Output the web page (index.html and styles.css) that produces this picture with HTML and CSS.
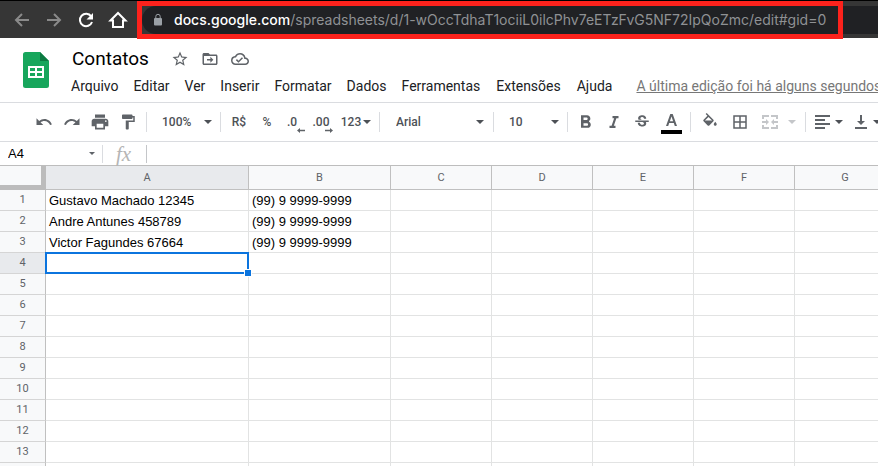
FILE: index.html
```html
<!DOCTYPE html>
<html lang="pt-BR">
<head>
<meta charset="utf-8">
<title>Contatos</title>
<link rel="stylesheet" href="styles.css">
</head>
<body>
<div class="browser">
  <button class="nav off" aria-label="Voltar"><svg width="20" height="20" viewBox="0 0 20 20"><path d="M17 10H4M10 4L4 10l6 6"/></svg></button>
  <button class="nav off" aria-label="Avançar"><svg width="20" height="20" viewBox="0 0 20 20"><path d="M3 10h13M10 4l6 6-6 6"/></svg></button>
  <button class="nav" aria-label="Recarregar"><svg width="20" height="20" viewBox="0 0 20 20"><path d="M15.2 6.4A6.2 6.2 0 1 0 16 12" /><path class="solid" d="M17 3v6.500h-6.500z"/></svg></button>
  <button class="nav" aria-label="Página inicial"><svg width="20" height="20" viewBox="0 0 20 20"><path d="M2.500 10.500L10 3l7.500 7.500H15V17H5v-6.500z"/></svg></button>
  <div class="omnibox">
    <svg class="lock" width="10" height="14" viewBox="0 0 10 14"><rect x="1" y="5" width="8" height="7.500" rx="1"/><path d="M2.800 5V3.500a2.200 2.200 0 0 1 4.400 0V5"/></svg>
    <div class="url" role="textbox" aria-label="Endereço" contenteditable="true" spellcheck="false"><span class="host">docs.google.com</span>/spreadsheets/d/1-wOccTdhaT1ociiL0ilcPhv7eETzFvG5NF72IpQoZmc/edit#gid=0</div>
    <div class="highlight"></div>
  </div>
</div>

<header class="header">
  <a class="logo" href="#" aria-label="Planilhas"><svg width="26" height="36" viewBox="0 0 26 36"><path fill="#17a65c" d="M2.500 0H17l9 9v24.500a2.500 2.500 0 0 1-2.500 2.500h-21A2.500 2.500 0 0 1 0 33.500v-31A2.500 2.500 0 0 1 2.500 0z"/><path fill="#0c7a42" d="M17 0l9 9h-9z"/><path fill="#fff" fill-rule="evenodd" d="M5 14h16v12H5zM7 16v3h5v-3zM14 16v3h5v-3zM7 21v3h5v-3zM14 21v3h5v-3z"/></svg></a>
  <div class="heading">
    <div class="title-row">
      <input class="title" aria-label="Nome do documento" value="Contatos" spellcheck="false">
      <button class="doc-icon" aria-label="Marcar com estrela"><svg width="18" height="18" viewBox="0 0 24 24"><path d="M22 9.240l-7.190-.620L12 2 9.190 8.630 2 9.240l5.460 4.730L5.820 21 12 17.270 18.180 21l-1.630-7.030L22 9.240zM12 15.400l-3.760 2.270 1-4.280-3.320-2.880 4.380-.380L12 6.100l1.710 4.040 4.380.380-3.320 2.880 1 4.280L12 15.400z"/></svg></button>
      <button class="doc-icon" aria-label="Mover"><svg width="18" height="18" viewBox="0 0 24 24"><path d="M20 6h-8l-2-2H4c-1.100 0-2 .9-2 2v12c0 1.100.9 2 2 2h16c1.100 0 2-.9 2-2V8c0-1.100-.9-2-2-2zm0 12H4V8h16v10zm-7.500-1l4-4-4-4v3H8v2h4.500z"/></svg></button>
      <button class="doc-icon" aria-label="Status do documento"><svg width="18" height="18" viewBox="0 0 24 24"><path d="M19.350 10.040A7.490 7.490 0 0 0 12 4C9.110 4 6.600 5.640 5.350 8.040A5.994 5.994 0 0 0 0 14c0 3.310 2.690 6 6 6h13c2.760 0 5-2.240 5-5 0-2.640-2.050-4.780-4.650-4.960zM19 18H6c-2.210 0-4-1.790-4-4 0-2.050 1.530-3.760 3.560-3.970l1.070-.110.500-.950A5.469 5.469 0 0 1 12 6c2.620 0 4.880 1.860 5.390 4.430l.300 1.500 1.530.110A2.980 2.980 0 0 1 22 15c0 1.650-1.350 3-3 3zm-9-3.820l-2.090-2.090L6.500 13.500 10 17l6.010-6.010-1.410-1.410z"/></svg></button>
    </div>
    <nav class="menu">
      <button>Arquivo</button><button>Editar</button><button>Ver</button><button>Inserir</button><button>Formatar</button><button>Dados</button><button>Ferramentas</button><button>Extensões</button><button>Ajuda</button>
      <a href="#">A última edição foi há alguns segundos</a>
    </nav>
  </div>
</header>

<div class="toolbar" role="toolbar">
  <div class="group">
    <button aria-label="Desfazer"><svg width="18" height="18" viewBox="0 0 24 24"><path d="M12.500 8c-2.650 0-5.050.99-6.900 2.600L2 7v9h9l-3.620-3.620c1.390-1.160 3.160-1.880 5.120-1.880 3.540 0 6.550 2.310 7.600 5.500l2.370-.780C21.080 11.030 17.150 8 12.500 8z"/></svg></button>
    <button aria-label="Refazer"><svg width="18" height="18" viewBox="0 0 24 24"><path d="M18.400 10.600C16.550 8.990 14.150 8 11.500 8c-4.650 0-8.580 3.030-9.960 7.220L3.900 16c1.050-3.190 4.050-5.500 7.600-5.500 1.950 0 3.730.720 5.120 1.880L13 16h9V7l-3.600 3.600z"/></svg></button>
    <button aria-label="Imprimir"><svg width="20" height="20" viewBox="0 0 24 24"><path d="M19 8H5c-1.660 0-3 1.340-3 3v6h4v4h12v-4h4v-6c0-1.660-1.340-3-3-3zm-3 11H8v-5h8v5zm3-7c-.550 0-1-.450-1-1s.450-1 1-1 1 .450 1 1-.450 1-1 1zm-1-9H6v4h12V3z"/></svg></button>
    <button aria-label="Pintar formatação"><svg width="18" height="18" viewBox="0 0 24 24"><path d="M18 4V3c0-.550-.450-1-1-1H5c-.550 0-1 .450-1 1v4c0 .550.450 1 1 1h12c.550 0 1-.450 1-1V6h1v4H9v11c0 .550.450 1 1 1h2c.550 0 1-.450 1-1v-9h8V4h-3z"/></svg></button>
  </div>
  <div class="group">
    <label class="pick zoom"><select aria-label="Zoom"><option>100%</option></select><span class="caret"></span></label>
  </div>
  <div class="group">
    <button>R$</button>
    <button>%</button>
    <button class="dec less" aria-label="Diminuir casas decimais">.0<svg width="8" height="5" viewBox="0 0 8 5"><path d="M0 2.500L3 0v1.700h5v1.600H3V5z"/></svg></button>
    <button class="dec" aria-label="Aumentar casas decimais">.00<svg width="8" height="5" viewBox="0 0 8 5"><path d="M8 2.500L5 0v1.700H0v1.600h5V5z"/></svg></button>
    <button class="drop tight">123<span class="caret"></span></button>
  </div>
  <div class="group">
    <label class="pick font"><select aria-label="Fonte"><option>Arial</option></select><span class="caret"></span></label>
  </div>
  <div class="group">
    <label class="pick size"><select aria-label="Tamanho"><option>10</option></select><span class="caret"></span></label>
  </div>
  <div class="group">
    <button aria-label="Negrito"><svg width="20" height="20" viewBox="0 0 24 24"><path d="M15.600 10.790c.970-.670 1.650-1.770 1.650-2.790 0-2.260-1.750-4-4-4H6v15h8.040c2.090 0 3.710-1.700 3.710-3.790 0-1.520-.860-2.820-2.150-3.420zM9 6.500h3.500c.830 0 1.500.670 1.500 1.500s-.670 1.500-1.500 1.500H9v-3zm4 10H9v-3h4c.830 0 1.500.670 1.500 1.500s-.670 1.500-1.500 1.500z"/></svg></button>
    <button aria-label="Itálico"><svg width="18" height="18" viewBox="0 0 24 24"><path d="M10 4v3h2.210l-3.420 10H6v3h8v-3h-2.210l3.420-10H18V4z"/></svg></button>
    <button aria-label="Tachado"><svg width="18" height="18" viewBox="0 0 24 24"><path d="M7.240 8.750c-.260-.480-.390-1.030-.390-1.670 0-.610.130-1.160.400-1.670.260-.500.630-.930 1.110-1.290.480-.350 1.050-.630 1.700-.830.660-.190 1.390-.290 2.180-.290.810 0 1.540.110 2.210.340.660.220 1.230.540 1.690.940.470.400.830.880 1.080 1.430s.380 1.150.380 1.810h-3.010c0-.310-.050-.590-.150-.850-.090-.270-.240-.490-.440-.680-.200-.190-.450-.330-.750-.440-.300-.100-.660-.160-1.060-.160-.390 0-.740.040-1.030.130s-.530.210-.720.360c-.190.160-.340.340-.440.550-.100.210-.150.430-.150.660 0 .480.250.880.740 1.210.380.250.770.480 1.410.700H7.390c-.050-.080-.110-.170-.150-.250zM21 12v-2H3v2h9.620c.180.070.400.140.550.200.370.170.660.340.870.510s.350.360.430.570c.070.200.110.430.110.690 0 .230-.050.450-.140.660-.090.200-.230.380-.420.530-.190.150-.420.260-.710.350-.290.080-.630.130-1.010.130-.430 0-.830-.040-1.180-.130s-.660-.230-.910-.420c-.250-.190-.450-.440-.590-.750s-.250-.760-.250-1.210H6.400c0 .550.080 1.130.240 1.580s.370.850.650 1.210c.280.350.600.660.980.920.370.260.780.480 1.220.650.440.170.900.300 1.380.390.480.080.960.130 1.440.130.800 0 1.530-.090 2.180-.280s1.210-.450 1.670-.790c.460-.340.820-.770 1.070-1.270s.380-1.070.380-1.710c0-.600-.100-1.140-.310-1.610-.050-.110-.110-.230-.170-.330H21z"/></svg></button>
    <button class="ink" aria-label="Cor do texto"><svg width="21" height="20" viewBox="0 0 21 20"><path d="M9.300 0h2.400L16 12h-2.200l-1-3H8.200l-1 3H5zm1.200 2.500L8.900 7.200h3.200z"/><rect class="bar" y="16" width="21" height="4"/></svg></button>
  </div>
  <div class="group wide">
    <button aria-label="Cor de preenchimento"><svg width="18" height="18" viewBox="0 0 24 24"><path d="M16.560 8.940L7.620 0 6.210 1.410l2.380 2.380-5.150 5.150a1.490 1.490 0 0 0 0 2.120l5.500 5.500c.290.290.680.440 1.060.440s.770-.150 1.060-.440l5.500-5.500c.590-.580.590-1.530 0-2.120zM5.210 10L10 5.210 14.790 10zM19 11.500s-2 2.170-2 3.500c0 1.100.9 2 2 2s2-.9 2-2c0-1.330-2-3.500-2-3.500z"/></svg></button>
    <button aria-label="Bordas"><svg width="18" height="18" viewBox="0 0 24 24"><path d="M3 3v18h18V3H3zm8 16H5v-6h6v6zm0-8H5V5h6v6zm8 8h-6v-6h6v6zm0-8h-6V5h6v6z"/></svg></button>
    <button class="merge" aria-label="Mesclar células" disabled><svg width="18" height="16" viewBox="0 0 18 16"><path d="M1 1h7v2H3v2H1zM10 1h7v4h-2V3h-5zM1 11h2v2h5v2H1zM15 11h2v4h-7v-2h5zM1 7h4V5l3 3-3 3V9H1zM17 7h-4V5l-3 3 3 3V9h4z"/></svg><span class="caret"></span></button>
  </div>
  <div class="group">
    <button class="drop" aria-label="Alinhamento horizontal"><svg width="16" height="14" viewBox="0 0 16 14"><path d="M0 0h15v2H0zM0 4h10v2H0zM0 8h15v2H0zM0 12h10v2H0z"/></svg><span class="caret"></span></button>
    <button class="drop" aria-label="Alinhamento vertical"><svg width="16" height="16" viewBox="0 0 16 16"><path d="M2 13h12v2H2zM7 1h2v6h3l-4 4-4-4h3z"/></svg><span class="caret"></span></button>
  </div>
</div>

<div class="formula">
  <label class="name-box"><input aria-label="Caixa de nome" value="A4"><span class="caret small"></span></label>
  <label class="fx" for="fx">fx</label>
  <input id="fx" class="fx-input" spellcheck="false">
</div>

<main class="sheet">
  <table>
    <colgroup><col class="c-num"><col class="c-a"><col class="c-b"><col class="c-n"><col class="c-n"><col class="c-n"><col class="c-n"><col class="c-n"></colgroup>
    <thead><tr><th class="corner"></th><th class="on">A</th><th>B</th><th>C</th><th>D</th><th>E</th><th>F</th><th>G</th></tr></thead>
    <tbody>
      <tr><th>1</th><td>Gustavo Machado 12345</td><td>(99) 9 9999-9999</td><td></td><td></td><td></td><td></td><td></td></tr>
      <tr><th>2</th><td>Andre Antunes 458789</td><td>(99) 9 9999-9999</td><td></td><td></td><td></td><td></td><td></td></tr>
      <tr><th>3</th><td>Victor Fagundes 67664</td><td>(99) 9 9999-9999</td><td></td><td></td><td></td><td></td><td></td></tr>
      <tr><th class="on">4</th><td class="active"><span class="cursor"></span></td><td></td><td></td><td></td><td></td><td></td><td></td></tr>
      <tr><th>5</th><td></td><td></td><td></td><td></td><td></td><td></td><td></td></tr>
      <tr><th>6</th><td></td><td></td><td></td><td></td><td></td><td></td><td></td></tr>
      <tr><th>7</th><td></td><td></td><td></td><td></td><td></td><td></td><td></td></tr>
      <tr><th>8</th><td></td><td></td><td></td><td></td><td></td><td></td><td></td></tr>
      <tr><th>9</th><td></td><td></td><td></td><td></td><td></td><td></td><td></td></tr>
      <tr><th>10</th><td></td><td></td><td></td><td></td><td></td><td></td><td></td></tr>
      <tr><th>11</th><td></td><td></td><td></td><td></td><td></td><td></td><td></td></tr>
      <tr><th>12</th><td></td><td></td><td></td><td></td><td></td><td></td><td></td></tr>
      <tr><th>13</th><td></td><td></td><td></td><td></td><td></td><td></td><td></td></tr>
      <tr><th></th><td></td><td></td><td></td><td></td><td></td><td></td><td></td></tr>
    </tbody>
  </table>
</main>
</body>
</html>
```
FILE: styles.css
```css
* { box-sizing: border-box; }
body {
  margin: 0;
  height: 100vh;
  display: flex;
  flex-direction: column;
  overflow: hidden;
  background: #fff;
  font-family: Roboto, "Liberation Sans", sans-serif;
  color: #202124;
}
button, input, select {
  font: inherit;
  color: inherit;
  background: none;
  border: 0;
  padding: 0;
  margin: 0;
  outline: 0;
  appearance: none;
}
svg { display: block; flex: none; }

.browser {
  flex: none;
  display: flex;
  align-items: center;
  height: 38px;
  padding-left: 6px;
  background: #363636;
  border-top: 1px solid #000;
}
.nav { width: 32px; display: flex; justify-content: center; }
.nav svg { fill: none; stroke: #fff; stroke-width: 2; }
.nav .solid { fill: #fff; stroke: none; }
.nav.off svg { stroke: #8a8a8a; }
.omnibox {
  position: relative;
  flex: 1;
  min-width: 0;
  display: flex;
  align-items: center;
  gap: 11px;
  height: 28px;
  margin-left: 8px;
  padding-left: 11px;
  background: #202124;
  border-radius: 14px 0 0 14px;
}
.lock { fill: #9aa0a6; stroke: none; }
.lock path { fill: none; stroke: #9aa0a6; stroke-width: 1; }
.url {
  font: 14px/20px Inter, sans-serif;
  color: #8f9194;
  white-space: nowrap;
}
.host { color: #fff; font-weight: 500; }
.highlight {
  position: absolute;
  left: -5px;
  right: 35px;
  top: -5px;
  bottom: -5px;
  border: 5px solid #fd221c;
}

.header {
  flex: none;
  display: flex;
  height: 64px;
  padding-left: 23px;
  overflow: hidden;
}
.logo { margin-top: 14px; }
.heading { padding: 9px 0 0 22px; }
.title-row { display: flex; align-items: center; gap: 12px; height: 24px; padding-left: 1px; }
.title { width: 87px; font-size: 19px; line-height: 24px; color: #000; }
.doc-icon { fill: #5f6368; }
.menu { display: flex; gap: 15px; padding-top: 5px; white-space: nowrap; font-size: 14px; line-height: 20px; }
.menu button { padding-right: 1px; }
.menu button:nth-child(-n+6) { padding-right: 0; }
.menu a { color: #777; margin-left: 8px; }

.toolbar {
  flex: none;
  display: flex;
  align-items: center;
  height: 40px;
  padding-left: 26px;
  border-top: 1px solid #dadce0;
  border-bottom: 1px solid #dadce0;
  font-size: 12px;
  font-weight: 500;
  line-height: 20px;
  color: #4d5156;
  fill: #5f6368;
}
.group { flex: none; display: flex; align-items: center; height: 20px; padding: 0 4px; }
.group + .group { border-left: 1px solid #dadce0; }
.group button { width: 28px; height: 20px; display: flex; align-items: center; justify-content: center; }
.group .drop { width: 38px; gap: 4px; }
.group .tight { gap: 2px; }
.wide button, .group .ink { width: 30px; }
.group .merge { width: 46px; gap: 9px; fill: #c4c6c9; color: #c4c6c9; }
.group .dec { position: relative; padding-right: 4px; }
.group .less { padding-right: 6px; }
.dec svg { position: absolute; right: 4px; bottom: -1px; }
.ink svg { margin-top: 4px; }
.ink .bar { fill: #000; }
.caret {
  flex: none;
  border: 4px solid transparent;
  border-top-color: currentColor;
  border-bottom: 0;
}
.caret.small { border-width: 3px; border-bottom: 0; color: #5f6368; }
.pick { display: flex; align-items: center; padding: 0 4px 0 11px; }
.pick select { flex: 1; min-width: 0; }
.zoom, .size { width: 65px; }
.font { width: 105px; padding: 0 5px 0 12px; }

.formula {
  flex: none;
  display: flex;
  align-items: center;
  height: 24px;
  border-bottom: 1px solid #bdbdbd;
}
.name-box {
  display: flex;
  align-items: center;
  width: 103px;
  height: 18px;
  padding: 0 7px 0 8px;
  border-right: 1px solid #dadce0;
}
.name-box input {
  flex: 1;
  min-width: 0;
  font: 13px/18px "Liberation Sans", sans-serif;
  color: #000;
}
.fx {
  width: 44px;
  padding-left: 13px;
  border-right: 1px solid #c4c6c9;
  font: italic 21px/18px "Liberation Serif", serif;
  color: #b5b5b5;
}
.fx-input { flex: 1; height: 18px; padding-left: 6px; font: 13px/18px "Liberation Sans", sans-serif; }

.sheet { flex: 1; min-height: 0; overflow: hidden; }
table { width: 896px; table-layout: fixed; border-collapse: separate; border-spacing: 0; }
.c-num { width: 46px; }
.c-a { width: 203px; }
.c-b { width: 142px; }
.c-n { width: 101px; }
th, td { height: 21px; padding: 0 3px; border: solid #e2e3e3; border-width: 0 1px 1px 0; }
th {
  background: #f8f9fa;
  border-color: #c0c0c0;
  font-size: 11px;
  font-weight: 400;
  line-height: 18px;
  color: #5f6368;
}
thead th { height: 24px; }
tbody th { border-bottom-color: #d5d5d5; }
th.on { background: #e8eaed; }
th.corner { border: solid #bcbcbc; border-width: 0 5px 5px 0; }
td {
  padding-top: 2px;
  font: 13px/18px "Liberation Sans", sans-serif;
  color: #000;
  text-align: left;
  white-space: nowrap;
}
.active { position: relative; }
.cursor { position: absolute; inset: -1px; border: 2px solid #0b74de; }
.cursor::after {
  content: "";
  position: absolute;
  right: -5px;
  bottom: -5px;
  width: 6px;
  height: 6px;
  background: #0b74de;
  border: 1px solid #fff;
}
```
